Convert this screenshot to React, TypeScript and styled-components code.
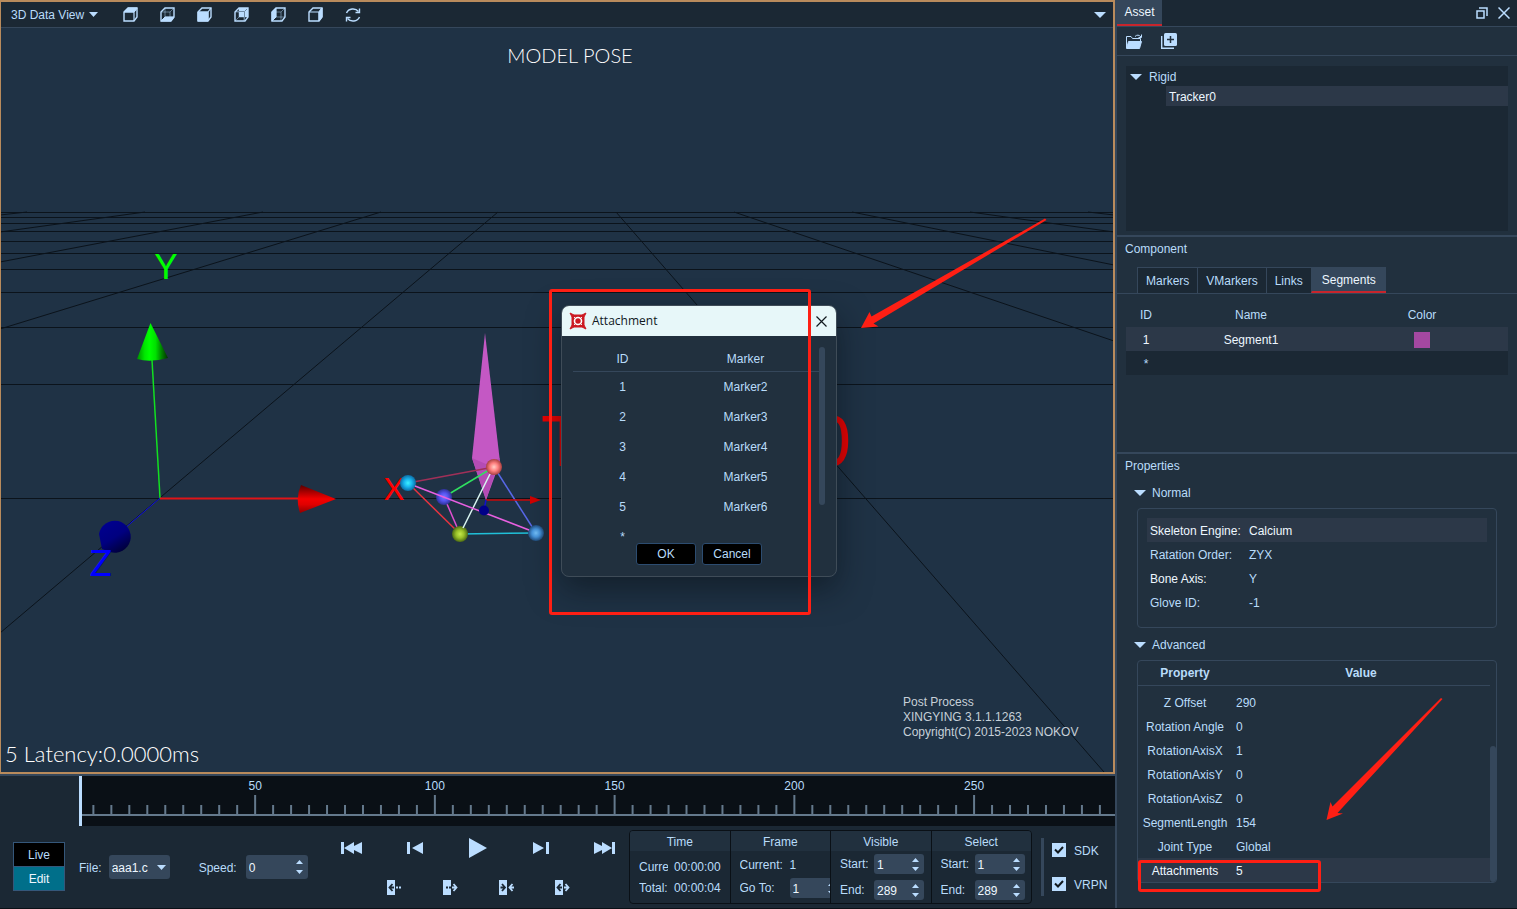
import React from "react";
import styled, { createGlobalStyle, css } from "styled-components";

const c = {
  text: "#b9dcfa",
  bright: "#eef7ff",
  icon: "#bbddff",
  deep: "#1b2834",
  panel: "#21303e",
  line: "#35475b",
  hover: "#2c3848",
  stage: "#1f3245",
  frame: "#b98b5c",
  red: "#ff1f14",
  tabRed: "#c8252c",
  black: "#0a1016",
};

const Global = createGlobalStyle`
  *, *::before, *::after { box-sizing: border-box; }
  body { margin: 0; background: ${c.deep}; }
  body, button, input, select, table {
    font-family: "Liberation Sans", Arial, sans-serif;
    font-size: 12px;
    line-height: 16px;
    color: ${c.text};
  }
  button { background: none; border: 0; padding: 0; cursor: pointer; }
  svg { display: block; }
  h2, h3, p { margin: 0; font-size: 12px; font-weight: 400; }
`;

const Page = styled.div`
  display: flex;
  min-height: 100vh;
  border-bottom: 1px solid ${c.black};
`;

const Left = styled.main`
  flex: 1;
  min-width: 0;
  display: flex;
  flex-direction: column;
`;

const View = styled.section`
  flex: 1;
  min-height: 0;
  display: flex;
  flex-direction: column;
  border: 2px solid ${c.frame};
  border-left-width: 1px;
`;

const ViewBar = styled.header`
  display: flex;
  align-items: center;
  height: 26px;
  background: ${c.deep};
  border-bottom: 1px solid ${c.line};
`;

const ViewMenu = styled.button`
  display: flex;
  align-items: center;
  gap: 5px;
  width: 111px;
  padding-left: 10px;
  white-space: nowrap;
`;

const ViewTool = styled.button`
  display: flex;
  justify-content: center;
  width: 37px;
`;

const BarEnd = styled.button`
  margin-left: auto;
  padding-right: 7px;
`;

const Stage = styled.div`
  position: relative;
  flex: 1;
  min-height: 640px;
  background: ${c.stage};
  overflow: hidden;
`;

const SceneSvg = styled.svg`
  position: absolute;
  inset: 0;
  width: 100%;
  height: 100%;
`;

const Highlight = styled.div<{ $x: number; $y: number; $w: number; $h: number }>`
  position: absolute;
  left: ${(p) => p.$x}px;
  top: ${(p) => p.$y}px;
  width: ${(p) => p.$w}px;
  height: ${(p) => p.$h}px;
  border: 3px solid ${c.red};
  border-radius: 3px;
  pointer-events: none;
`;

const Arrow = styled.svg<{ $x: number; $y: number }>`
  position: absolute;
  left: ${(p) => p.$x}px;
  top: ${(p) => p.$y}px;
  fill: ${c.red};
  pointer-events: none;
`;

/* Attachment dialog */
const Dialog = styled.div`
  position: absolute;
  left: 560px;
  top: 277px;
  width: 276px;
  height: 272px;
  background: ${c.panel};
  border: 1px solid #3f4c58;
  border-radius: 8px;
  overflow: hidden;
`;

const DialogShadow = styled.div`
  position: absolute;
  left: 560px;
  top: 277px;
  width: 276px;
  height: 272px;
  border-radius: 8px;
  box-shadow: 0 12px 32px rgba(10, 16, 22, 0.55);
`;

const DialogTitle = styled.header`
  display: flex;
  align-items: center;
  height: 30px;
  padding: 0 9px 0 7px;
  gap: 5px;
  background: #e7f7f9;
  color: #10181e;
  font-family: "Open Sans", "Noto Sans", sans-serif;

  button { margin-left: auto; }
`;

const DialogBody = styled.div`
  display: flex;
  height: 195px;
  margin: 11px 11px 0;
  overflow: hidden;
`;

const DialogTable = styled.table`
  width: 246px;
  border-collapse: collapse;
  table-layout: fixed;
  align-self: flex-start;

  th, td { padding: 0; text-align: center; font-weight: 400; height: 30px; }
  td { padding-top: 2px; }
  th { height: 24px; border-bottom: 1px solid ${c.line}; }
  th:first-child { width: 99px; }
`;

const Thumb = styled.div<{ $w: number; $h: number }>`
  width: ${(p) => p.$w}px;
  height: ${(p) => p.$h}px;
  border-radius: 3px;
  background: ${c.line};
`;

const DialogActions = styled.div`
  display: flex;
  gap: 6px;
  padding: 1px 0 0 74px;
`;

const DialogButton = styled.button`
  width: 60px;
  height: 22px;
  background: #000;
  border: 1px solid #2c4c70;
  border-radius: 3px;
`;

/* Timeline */
const TimelineRow = styled.section`
  height: 52px;
  padding-left: 79px;
  border-top: 2px solid ${c.line};
  background: ${c.deep};
`;

const Track = styled.div`
  height: 50px;
  background: ${c.black};
  border-left: 3px solid ${c.icon};

  > svg { width: calc(100% + 3px); height: 50px; margin-left: -3px; }
`;

/* Control strip */
const Controls = styled.section`
  display: flex;
  height: 82px;
  padding: 0 8px 0 13px;
  background: ${c.deep};
`;

const ModeSwitch = styled.div`
  flex: none;
  display: flex;
  flex-direction: column;
  width: 52px;
  height: 49px;
  margin-top: 16px;
  border: 1px solid #35577a;
`;

const Mode = styled.button<{ $on?: boolean }>`
  flex: 1;
  background: ${(p) => (p.$on ? "#006f8a" : "#000")};
  color: ${(p) => (p.$on ? c.bright : c.text)};
  & + & { border-top: 1px solid #35577a; }
`;

const Labelled = styled.div<{ $ml: number; $gap: number }>`
  flex: none;
  display: flex;
  align-items: center;
  height: 24px;
  margin: 29px 0 0 ${(p) => p.$ml}px;
  gap: ${(p) => p.$gap}px;

  label { padding-top: 2px; }
`;

const fieldBox = css`
  background: ${c.line};
  border-radius: 3px;
  color: ${c.bright};
`;

const SelectBox = styled.div`
  position: relative;
  width: 61px;
  height: 24px;

  select {
    ${fieldBox}
    width: 100%;
    height: 100%;
    padding: 1px 0 0 3px;
    border: 0;
    appearance: none;
  }
  svg { position: absolute; right: 4px; top: 10px; pointer-events: none; }
`;

const SpinBox = styled.div<{ $w: number; $h: number }>`
  ${fieldBox}
  flex: none;
  display: flex;
  align-items: center;
  width: ${(p) => p.$w}px;
  height: ${(p) => p.$h}px;
  padding-right: 5px;

  input {
    flex: 1;
    min-width: 0;
    padding: 1px 0 0 3px;
    border: 0;
    background: none;
    color: inherit;
  }
`;

const SpinArrows = styled.div<{ $gap: number }>`
  display: flex;
  flex-direction: column;
  gap: ${(p) => p.$gap}px;
`;

const Playback = styled.div`
  flex: 1;
  min-width: 0;
  display: flex;
  flex-direction: column;
  align-items: center;
  padding: 10px 0 0 20px;
  gap: 15px;
`;

const PlayRow = styled.div<{ $w: number }>`
  display: flex;
  height: 24px;

  button {
    display: flex;
    align-items: center;
    justify-content: center;
    width: ${(p) => p.$w}px;
  }
`;

const Readouts = styled.div`
  flex: none;
  display: flex;
  width: 403px;
  height: 74px;
  margin-top: 4px;
  border: 1px solid ${c.black};
  border-radius: 4px;
  overflow: hidden;
`;

const Readout = styled.div`
  flex: 1;
  min-width: 0;
  overflow: hidden;
  & + & { border-left: 1px solid ${c.black}; }

  h3 {
    height: 20px;
    line-height: 22px;
    text-align: center;
    background: ${c.panel};
  }
`;

const Lines = styled.div<{ $top: number; $gap: number }>`
  display: flex;
  flex-direction: column;
  gap: ${(p) => p.$gap}px;
  padding: ${(p) => p.$top}px 0 0 9px;
`;

const Line = styled.div<{ $label: number; $gap?: number }>`
  display: flex;
  align-items: center;
  min-height: 16px;
  gap: ${(p) => p.$gap ?? 0}px;

  > :first-child {
    flex: none;
    width: ${(p) => p.$label}px;
    overflow: hidden;
    white-space: nowrap;
  }
`;

const Streams = styled.div`
  flex: none;
  display: flex;
  flex-direction: column;
  justify-content: space-between;
  height: 58px;
  margin: 12px 0 0 9px;
  padding-left: 8px;
  border-left: 3px solid ${c.line};
`;

const Check = styled.label`
  display: flex;
  align-items: center;
  gap: 8px;
  height: 24px;
  width: 55px;
  white-space: nowrap;

  span { padding-top: 2px; }

  input {
    appearance: none;
    flex: none;
    width: 14px;
    height: 14px;
    margin: 0;
    background: ${c.icon}
      url("data:image/svg+xml,%3Csvg xmlns='http://www.w3.org/2000/svg' viewBox='0 0 14 14'%3E%3Cpath d='M3 6.5 6 9.5 11 4' fill='none' stroke='%2310181e' stroke-width='2'/%3E%3C/svg%3E");
  }
`;

/* Right dock */
const Dock = styled.aside`
  flex: none;
  display: flex;
  flex-direction: column;
  width: 402px;
  border-left: 2px solid ${c.line};
  background: ${c.panel};
`;

const DockHead = styled.header`
  display: flex;
  height: 27px;
  background: ${c.deep};
  border-bottom: 1px solid ${c.line};
`;

const DockTab = styled.button`
  width: 45px;
  height: 26px;
  background: ${c.line};
  border-bottom: 2px solid ${c.tabRed};
  color: ${c.bright};
`;

const WindowTools = styled.div`
  display: flex;
  align-items: center;
  gap: 10px;
  margin-left: auto;
  padding-right: 7px;
`;

const DockTools = styled.div`
  display: flex;
  align-items: center;
  gap: 19px;
  height: 29px;
  padding-left: 9px;
  border-bottom: 1px solid ${c.line};
`;

const AssetBody = styled.section`
  height: 181px;
  padding: 10px 9px 4px;
  border-bottom: 2px solid ${c.line};
`;

const Tree = styled.ul`
  height: 165px;
  margin: 0;
  padding: 0;
  list-style: none;
  background: ${c.deep};

  ul { margin: 0; padding: 0 0 0 40px; list-style: none; }
`;

const TreeRow = styled.div<{ $on?: boolean }>`
  display: flex;
  align-items: center;
  gap: 7px;
  height: 20px;
  padding: 2px 0 0 ${(p) => (p.$on ? 3 : 4)}px;
  background: ${(p) => (p.$on ? c.hover : "none")};
  color: ${(p) => (p.$on ? c.bright : c.text)};
`;

const ComponentPane = styled.section`
  height: 217px;
  padding-top: 4px;
  border-bottom: 2px solid ${c.line};

  > h2 { padding-left: 8px; }
`;

const Tabs = styled.nav`
  display: flex;
  height: 27px;
  margin-top: 10px;
  padding-left: 20px;
  border-bottom: 1px solid ${c.line};
`;

const Tab = styled.button<{ $on?: boolean }>`
  padding: 0 8px;
  background: ${(p) => (p.$on ? c.line : c.deep)};
  border: 1px solid ${c.line};
  border-width: 1px 0 0 1px;
  ${(p) =>
    p.$on &&
    css`
      padding: 0 10px;
      color: ${c.bright};
      border-bottom: 2px solid ${c.tabRed};
    `}
`;

const SegmentTable = styled.table`
  width: 382px;
  margin: 9px 0 0 9px;
  border-collapse: collapse;
  table-layout: fixed;

  th, td { height: 24px; padding: 0; text-align: center; font-weight: 400; }
  td { padding-top: 1px; }
  th:nth-child(1) { width: 40px; }
  th:nth-child(2) { width: 170px; }
`;

const SegmentRow = styled.tr<{ $on?: boolean }>`
  background: ${(p) => (p.$on ? c.hover : c.deep)};
  color: ${(p) => (p.$on ? c.bright : c.text)};
`;

const Swatch = styled.span`
  display: block;
  width: 16px;
  height: 16px;
  margin: 0 auto;
  background: #a448a1;
`;

const PropertiesPane = styled.section`
  flex: 1;
  padding: 4px 20px 0;

  > h2 { margin-left: -12px; }
`;

const Fold = styled.button<{ $top: number }>`
  display: flex;
  align-items: center;
  gap: 6px;
  margin: ${(p) => p.$top}px 0 7px -3px;
`;

const NormalBox = styled.dl`
  height: 120px;
  margin: 0;
  padding: 9px;
  border: 1px solid ${c.line};
  border-radius: 4px;
`;

const NormalRow = styled.div<{ $on?: boolean; $label?: boolean }>`
  display: flex;
  height: 24px;
  padding: 2px 0 0 3px;
  align-items: center;
  background: ${(p) => (p.$on ? c.hover : "none")};

  dt { width: 99px; color: ${(p) => (p.$label ? c.bright : c.text)}; }
  dd { margin: 0; color: ${(p) => (p.$on ? c.bright : c.text)}; }
`;

const AdvancedBox = styled.div`
  position: relative;
  display: flex;
  align-items: flex-end;
  height: 223px;
  border: 1px solid ${c.line};
  border-radius: 4px;
`;

const AdvancedTable = styled.table`
  width: 352px;
  height: 221px;
  border-collapse: collapse;
  table-layout: fixed;

  th, td { padding: 0; }
  th { height: 24px; border-bottom: 1px solid ${c.line}; text-align: center; }
  th:first-child { width: 94px; }
  td { height: 24px; padding: 2px 0 0 4px; }
  td:first-child { padding-left: 0; text-align: center; white-space: nowrap; }
  tbody::before { content: ""; display: block; height: 4px; }
`;

const AdvancedRow = styled.tr<{ $on?: boolean }>`
  background: ${(p) => (p.$on ? c.hover : "none")};
  color: ${(p) => (p.$on ? c.bright : c.text)};
`;

const Caret = ({ w = 12, h = 6, up = false }: { w?: number; h?: number; up?: boolean }) => (
  <svg width={w} height={h} viewBox="0 0 12 6" preserveAspectRatio="none" fill={c.icon}>
    <path d={up ? "M0 6h12L6 0z" : "M0 0h12L6 6z"} />
  </svg>
);

type Face = "top" | "bottom" | "front" | "back" | "left" | "right";

const faces: Record<Face, string> = {
  top: "M1 5 5 1H14L11 5Z",
  bottom: "M1 14 5 10H14L11 14Z",
  front: "M1 5H11V14H1Z",
  back: "M5 1H14V10H5Z",
  left: "M1 5 5 1V10L1 14Z",
  right: "M11 5 14 1V10L11 14Z",
};

const Cube = ({ face }: { face: Face }) => {
  const open = face === "bottom" || face === "back" || face === "left";
  return (
    <svg width="15" height="15" viewBox="0 0 15 15" fill="none" stroke={c.icon}>
      {open ? (
        <path d="M5 1V10H14M5 10 1 14M1 5H10V14M10 5 14 1" opacity=".45" />
      ) : (
        <path d="M1 5H11V14M11 5 14 1" strokeWidth="1.2" />
      )}
      <path d={faces[face]} fill={c.icon} stroke={face === "back" ? "none" : c.icon} />
      {face === "back" && <path d="M2 4.500H10.500V13M10.500 4.500 13 2" stroke="#6f8ba6" />}
      <path d="M1 5 5 1H14V10L11 14H1Z" strokeWidth="1.400" />
    </svg>
  );
};

const Spin = ({ label, value, w = 50, h = 20 }: { label: string; value: string; w?: number; h?: number }) => (
  <SpinBox $w={w} $h={h}>
    <input id={label} aria-label={label} defaultValue={value} />
    <SpinArrows $gap={h > 20 ? 6 : 5}>
      <button aria-label={label + " up"}><Caret w={7} h={4} up /></button>
      <button aria-label={label + " down"}><Caret w={7} h={4} /></button>
    </SpinArrows>
  </SpinBox>
);

const rowsY = [212, 217, 223, 231, 241, 253, 269, 292, 327, 384, 498];
const rays = [
  [27, 212, 0, 215], [145, 212, 0, 232], [263, 212, 0, 262], [381, 212, 0, 329], [498, 212, 0, 633],
  [616, 212, 1104, 772], [734, 212, 1114, 341], [852, 212, 1114, 265], [970, 212, 1114, 232], [1088, 212, 1114, 215],
];

const balls = [
  { id: "cyan", x: 408, y: 483, a: "#3df0ff", m: "#18b4ee", b: "#0c6ca4" },
  { id: "violet", x: 444, y: 497, a: "#7878ff", m: "#5454f0", b: "#2e3296" },
  { id: "pink", x: 494, y: 467, a: "#ffd0c8", m: "#ff8080", b: "#a84040" },
  { id: "olive", x: 460, y: 534, a: "#c4e84c", m: "#98c028", b: "#4c6a14" },
  { id: "sky", x: 536, y: 533, a: "#74c0f8", m: "#4694dc", b: "#204c7c" },
];

const Scene = () => (
  <SceneSvg viewBox="1 28 1112 744" preserveAspectRatio="xMinYMin slice">
    <defs>
      {balls.map((b) => (
        <radialGradient id={b.id} key={b.id}>
          <stop offset="0" stopColor={b.a} />
          <stop offset=".5" stopColor={b.m} />
          <stop offset="1" stopColor={b.b} />
        </radialGradient>
      ))}
      <linearGradient id="coneY"><stop offset="0" stopColor="#008c00" /><stop offset=".25" stopColor="#00e800" /><stop offset=".4" stopColor="#00ff00" /><stop offset=".6" stopColor="#00e000" /><stop offset=".8" stopColor="#008000" /><stop offset="1" stopColor="#003000" /></linearGradient>
      <linearGradient id="coneX" x2="0" y2="1"><stop offset="0" stopColor="#5a0000" /><stop offset=".3" stopColor="#b80000" /><stop offset=".5" stopColor="#f40000" /><stop offset=".7" stopColor="#e00000" /><stop offset="1" stopColor="#900000" /></linearGradient>
      <linearGradient id="coneZ" x1=".2" x2=".8" y2="1"><stop offset="0" stopColor="#000090" /><stop offset=".5" stopColor="#000080" /><stop offset="1" stopColor="#000030" /></linearGradient>
    </defs>

    <g stroke="#0b131b" strokeWidth="1">
      {rowsY.map((y) => <path key={y} d={`M0 ${y + 0.5}H1114`} />)}
      {rays.map(([x1, y1, x2, y2]) => <path key={x1} d={`M${x1} ${y1}L${x2} ${y2}`} />)}
    </g>

    <path d="M160 498 152 360" stroke="#12e020" strokeWidth="1.500" />
    <path d="M160 498.500H300" stroke="#e01418" strokeWidth="2" />
    <path d="M160 498 125 528" stroke="#1010e0" />
    <path d="M150.500 323 137 359Q150 363 168 358Z" fill="url(#coneY)" />
    <path d="M336 499 301 485Q295 498 300 513Z" fill="url(#coneX)" />
    <path d="M99 534A16 16 0 1 1 110 552L102 549Z" fill="url(#coneZ)" />

    <g fontFamily="Lato, sans-serif" textAnchor="middle">
      <text x="166" y="279" fontSize="35" fill="#00ff00">Y</text>
      <text x="394" y="500" fontSize="31" fill="#ff0000">X</text>
      <text x="101" y="576" fontSize="37" fill="#0000ff">Z</text>
    </g>

    <g fontFamily="Liberation Sans, Arial, sans-serif" fontSize="72" fill="#f00000">
      <text x="541" y="466">T</text>
      <text x="811" y="466">0</text>
    </g>

    <path d="M485 333 472 458 486 500 500 462Z" fill="#c458c4" />
    <path d="M472 458 486 464 500 458 486 500Z" fill="#b44cb4" />
    <g strokeWidth="1.500">
      <path d="M408 483 494 467" stroke="#a03058" />
      <path d="M408 483 460 534" stroke="#e83440" />
      <path d="M444 497 494 467" stroke="#30e060" />
      <path d="M444 497 460 534" stroke="#e050d0" />
      <path d="M494 467 536 533" stroke="#5868e8" />
      <path d="M460 534 536 533" stroke="#20c0d8" />
      <path d="M486 500H530" stroke="#c80808" />
      <path d="M486 500 484 510" stroke="#1010d0" />
      <path d="M530 496 541 500 530 504Z" fill="#d00000" />
    </g>
    {balls.map((b) => <circle key={b.id} cx={b.x} cy={b.y} r="8" fill={`url(#${b.id})`} />)}
    <path d="M490 474 463 528" stroke="#d8f4f0" strokeWidth="1.500" />
    <path d="M415 486 529 530" stroke="#e860e0" strokeWidth="1.500" />
    <circle cx="484" cy="510.500" r="5" fill="#000088" />

    <g fontFamily="Lato, sans-serif" fill="#ffffff" fontWeight="300">
      <text x="570" y="63" fontSize="20" textAnchor="middle">MODEL POSE</text>
      <text x="5" y="762" fontSize="22">5 Latency:0.0000ms</text>
    </g>
    <g fontFamily="Liberation Sans, Arial, sans-serif" fontSize="12" fill="#c6d0d8">
      <text x="903" y="706">Post Process</text>
      <text x="903" y="721">XINGYING 3.1.1.1263</text>
      <text x="903" y="736">Copyright(C) 2015-2023 NOKOV</text>
    </g>
  </SceneSvg>
);

const AttachmentDialog = () => (
  <Dialog role="dialog" aria-label="Attachment">
    <DialogTitle>
      <svg width="18" height="18" viewBox="0 0 18 18">
        <path d="M1 1 5 3H13L17 1 15 5V13L17 17 13 15H5L1 17 3 13V5Z" fill="#cc1a22" stroke="#cc1a22" />
        <circle cx="9" cy="9" r="3.500" fill="none" stroke="#fff" strokeWidth="1.600" />
        <path d="M5 5 6 6M13 5 12 6M5 13 6 12M13 13 12 12" stroke="#e7f7f9" strokeWidth="1" />
      </svg>
      <span>Attachment</span>
      <button aria-label="Close">
        <svg width="11" height="11" viewBox="0 0 11 11" stroke="#10181e" strokeWidth="1.200">
          <path d="M.5.5 10.500 10.500M10.500.5.5 10.500" />
        </svg>
      </button>
    </DialogTitle>
    <DialogBody>
      <DialogTable>
        <thead><tr><th>ID</th><th>Marker</th></tr></thead>
        <tbody>
          {[1, 2, 3, 4, 5].map((n) => (
            <tr key={n}><td>{n}</td><td>Marker{n + 1}</td></tr>
          ))}
          <tr><td>*</td><td /></tr>
        </tbody>
      </DialogTable>
      <Thumb $w={6} $h={158} />
    </DialogBody>
    <DialogActions>
      <DialogButton>OK</DialogButton>
      <DialogButton>Cancel</DialogButton>
    </DialogActions>
  </Dialog>
);

const frames = Array.from({ length: 57 }, (_, i) => (i + 1) * 5);
const at = (v: number) => `${((v - 1) / 288.2) * 100}%`;

const Timeline = () => (
  <TimelineRow>
    <Track>
      <svg>
        <rect x="3" y="38" width="100%" height="2" fill="#64798c" />
        {frames.map((v) => {
          const major = v % 50 === 0;
          return (
            <svg key={v} x={at(v)} overflow="visible">
              <rect x="-1" y={major ? 19 : 29} width="2" height={major ? 20 : 10} fill="#64798c" />
              {major && <text x="0" y="14" fill={c.text} textAnchor="middle">{v}</text>}
            </svg>
          );
        })}
      </svg>
    </Track>
  </TimelineRow>
);

const StepIcon = ({ kind }: { kind: number }) => (
  <svg width="16" height="15" viewBox="0 0 16 15" fill="none" strokeWidth="1.800">
    <rect x="1" y="0" width="8" height="15" fill={c.icon} />
    {(kind === 0 || kind === 3) && <path d="M6.500 4 3.500 7.500 6.500 11M3.500 7.500H8" stroke={c.deep} />}
    {kind === 1 && <path d="M4 7.500H6M7 7.500H9" stroke={c.deep} />}
    {kind === 2 && <path d="M4 4 7 7.500 4 11M2.500 7.500H7" stroke={c.deep} />}
    {kind === 0 && <path d="M10 7.500H12M13 7.500H15" stroke={c.icon} />}
    {(kind === 1 || kind === 3) && <path d="M11.500 4 14.500 7.500 11.500 11M10 7.500H14" stroke={c.icon} />}
    {kind === 2 && <path d="M14.500 4 11.500 7.500 14.500 11M12 7.500H16" stroke={c.icon} />}
  </svg>
);

const playIcons: [string, number, number, string][] = [
  ["First frame", 22, 12, "M0 0H3V12H0ZM3 6 13 0V4L21 0V12L13 8V12Z"],
  ["Previous frame", 16, 12, "M0 0H3V12H0ZM5 6 16 0V12Z"],
  ["Play", 18, 20, "M0 0 18 10 0 20Z"],
  ["Next frame", 16, 12, "M16 0H13V12H16ZM11 6 0 0V12Z"],
  ["Last frame", 22, 12, "M22 0H19V12H22ZM19 6 9 0V4L1 0V12L9 8V12Z"],
];

const RangeReadout = ({ title }: { title: string }) => (
  <Readout>
    <h3>{title}</h3>
    <Lines $top={3} $gap={6}>
      <Line $label={34}><label htmlFor={title + " start"}>Start:</label><Spin label={title + " start"} value="1" /></Line>
      <Line $label={34}><label htmlFor={title + " end"}>End:</label><Spin label={title + " end"} value="289" /></Line>
    </Lines>
  </Readout>
);

const ControlStrip = () => (
  <Controls>
    <ModeSwitch>
      <Mode>Live</Mode>
      <Mode $on>Edit</Mode>
    </ModeSwitch>
    <Labelled $ml={14} $gap={7}>
      <label htmlFor="file">File:</label>
      <SelectBox>
        <select id="file"><option>aaa1.c</option></select>
        <Caret w={9} h={5} />
      </SelectBox>
    </Labelled>
    <Labelled $ml={29} $gap={9}>
      <label htmlFor="Speed">Speed:</label>
      <Spin label="Speed" value="0" w={62} h={24} />
    </Labelled>
    <Playback>
      <PlayRow $w={63}>
        {playIcons.map(([name, w, h, d]) => (
          <button key={name} aria-label={name}>
            <svg width={w} height={h} fill={c.icon}><path d={d} /></svg>
          </button>
        ))}
      </PlayRow>
      <PlayRow $w={56}>
        {["Cut before", "Cut after", "Trim in", "Trim out"].map((n, i) => (
          <button key={n} aria-label={n}><StepIcon kind={i} /></button>
        ))}
      </PlayRow>
    </Playback>
    <Readouts>
      <Readout>
        <h3>Time</h3>
        <Lines $top={8} $gap={5}>
          <Line $label={29} $gap={6}><span>Current:</span><span>00:00:00</span></Line>
          <Line $label={29} $gap={6}><span>Total:</span><span>00:00:04</span></Line>
        </Lines>
      </Readout>
      <Readout>
        <h3>Frame</h3>
        <Lines $top={6} $gap={5}>
          <Line $label={50}><span>Current:</span><span>1</span></Line>
          <Line $label={50}><label htmlFor="Go to">Go To:</label><Spin label="Go to" value="1" /></Line>
        </Lines>
      </Readout>
      <RangeReadout title="Visible" />
      <RangeReadout title="Select" />
    </Readouts>
    <Streams>
      <Check><input type="checkbox" defaultChecked /><span>SDK</span></Check>
      <Check><input type="checkbox" defaultChecked /><span>VRPN</span></Check>
    </Streams>
  </Controls>
);

const normal = [
  { k: "Skeleton Engine:", v: "Calcium", on: true, label: true },
  { k: "Ratation Order:", v: "ZYX" },
  { k: "Bone Axis:", v: "Y", label: true },
  { k: "Glove ID:", v: "-1" },
];

const advanced = [
  ["Z Offset", "290"],
  ["Rotation Angle", "0"],
  ["RotationAxisX", "1"],
  ["RotationAxisY", "0"],
  ["RotationAxisZ", "0"],
  ["SegmentLength", "154"],
  ["Joint Type", "Global"],
  ["Attachments", "5"],
];

export default function App() {
  return (
    <>
      <Global />
      <Page>
        <Left>
          <View>
            <ViewBar>
              <ViewMenu>3D Data View<Caret w={9} h={5} /></ViewMenu>
              {(["top", "bottom", "front", "back", "left", "right"] as Face[]).map((f) => (
                <ViewTool key={f} aria-label={f + " view"}><Cube face={f} /></ViewTool>
              ))}
              <ViewTool aria-label="Reset view">
                <svg width="16" height="16" viewBox="0 0 16 16" fill="none" stroke={c.icon} strokeWidth="1.400">
                  <path d="M1.500 6A7 6.500 0 0 1 13.500 4.500M14.500 10A7 6.500 0 0 1 2.500 11.500" />
                  <path d="M14.500 1.500V5.500H10.500M1.500 14.500V10.500H5.500" />
                </svg>
              </ViewTool>
              <BarEnd aria-label="More"><Caret /></BarEnd>
            </ViewBar>
            <Stage>
              <Scene />
              <DialogShadow />
              <AttachmentDialog />
              <Highlight $x={548} $y={261} $w={262} $h={326} />
              <Arrow $x={860} $y={190} width="186" height="111" viewBox="861 218 186 111">
                <path d="M1045 218.500 1046.500 220 873.500 323.500 878.500 326.500 861 328 869.500 312 871.500 316.500Z" />
              </Arrow>
            </Stage>
          </View>
          <Timeline />
          <ControlStrip />
        </Left>

        <Dock>
          <DockHead>
            <DockTab>Asset</DockTab>
            <WindowTools>
              <button aria-label="Float">
                <svg width="12" height="12" viewBox="0 0 12 12" fill="none" stroke={c.icon} strokeWidth="1.500">
                  <path d="M1 4H8V11H1ZM3 1H11V9" />
                </svg>
              </button>
              <button aria-label="Close panel">
                <svg width="12" height="12" viewBox="0 0 12 12" stroke={c.icon} strokeWidth="1.500">
                  <path d="M.5.5 11.500 11.500M11.500.5.5 11.500" />
                </svg>
              </button>
            </WindowTools>
          </DockHead>
          <DockTools>
            <button aria-label="Open">
              <svg width="16" height="15" viewBox="0 0 16 15" fill="none" stroke={c.icon}>
                <path d="M.5 14V2.500H5L6.500 4.500H14.500V7M9 2.500Q12-.5 15 3M15.500.5V3.500H12.500" />
                <path d="M2.500 7.500H15.500L13.500 14.500H.5Z" fill={c.icon} />
              </svg>
            </button>
            <button aria-label="Add">
              <svg width="16" height="16" viewBox="0 0 16 16">
                <rect x="3" y="0" width="13" height="13" rx="1.500" fill={c.icon} />
                <path d="M.7 3V15.300H13" fill="none" stroke={c.icon} strokeWidth="1.400" />
                <path d="M9.500 3V10M6 6.500H13" stroke={c.panel} strokeWidth="1.500" />
              </svg>
            </button>
          </DockTools>
          <AssetBody>
            <Tree>
              <li>
                <TreeRow><Caret />Rigid</TreeRow>
                <ul><li><TreeRow $on>Tracker0</TreeRow></li></ul>
              </li>
            </Tree>
          </AssetBody>
          <ComponentPane>
            <h2>Component</h2>
            <Tabs>
              <Tab>Markers</Tab>
              <Tab>VMarkers</Tab>
              <Tab>Links</Tab>
              <Tab $on>Segments</Tab>
            </Tabs>
            <SegmentTable>
              <thead><tr><th>ID</th><th>Name</th><th>Color</th></tr></thead>
              <tbody>
                <SegmentRow $on><td>1</td><td>Segment1</td><td><Swatch /></td></SegmentRow>
                <SegmentRow><td>*</td><td /><td /></SegmentRow>
              </tbody>
            </SegmentTable>
          </ComponentPane>
          <PropertiesPane>
            <h2>Properties</h2>
            <Fold $top={11}><Caret />Normal</Fold>
            <NormalBox>
              {normal.map((r) => (
                <NormalRow key={r.k} $on={r.on} $label={r.label}><dt>{r.k}</dt><dd>{r.v}</dd></NormalRow>
              ))}
            </NormalBox>
            <Fold $top={9}><Caret />Advanced</Fold>
            <AdvancedBox>
              <AdvancedTable>
                <thead><tr><th>Property</th><th>Value</th></tr></thead>
                <tbody>
                  {advanced.map(([k, v]) => (
                    <AdvancedRow key={k} $on={k === "Attachments"}><td>{k}</td><td>{v}</td></AdvancedRow>
                  ))}
                </tbody>
              </AdvancedTable>
              <Thumb $w={6} $h={136} />
              <Highlight $x={0} $y={199} $w={183} $h={32} />
              <Arrow $x={188} $y={37} width="117" height="123" viewBox="1326 698 117 123">
                <path d="M1441 698 1442.500 699 1337.500 813 1343 813.500 1326.500 820 1330.500 802 1332.500 806.500Z" />
              </Arrow>
            </AdvancedBox>
          </PropertiesPane>
        </Dock>
      </Page>
    </>
  );
}
